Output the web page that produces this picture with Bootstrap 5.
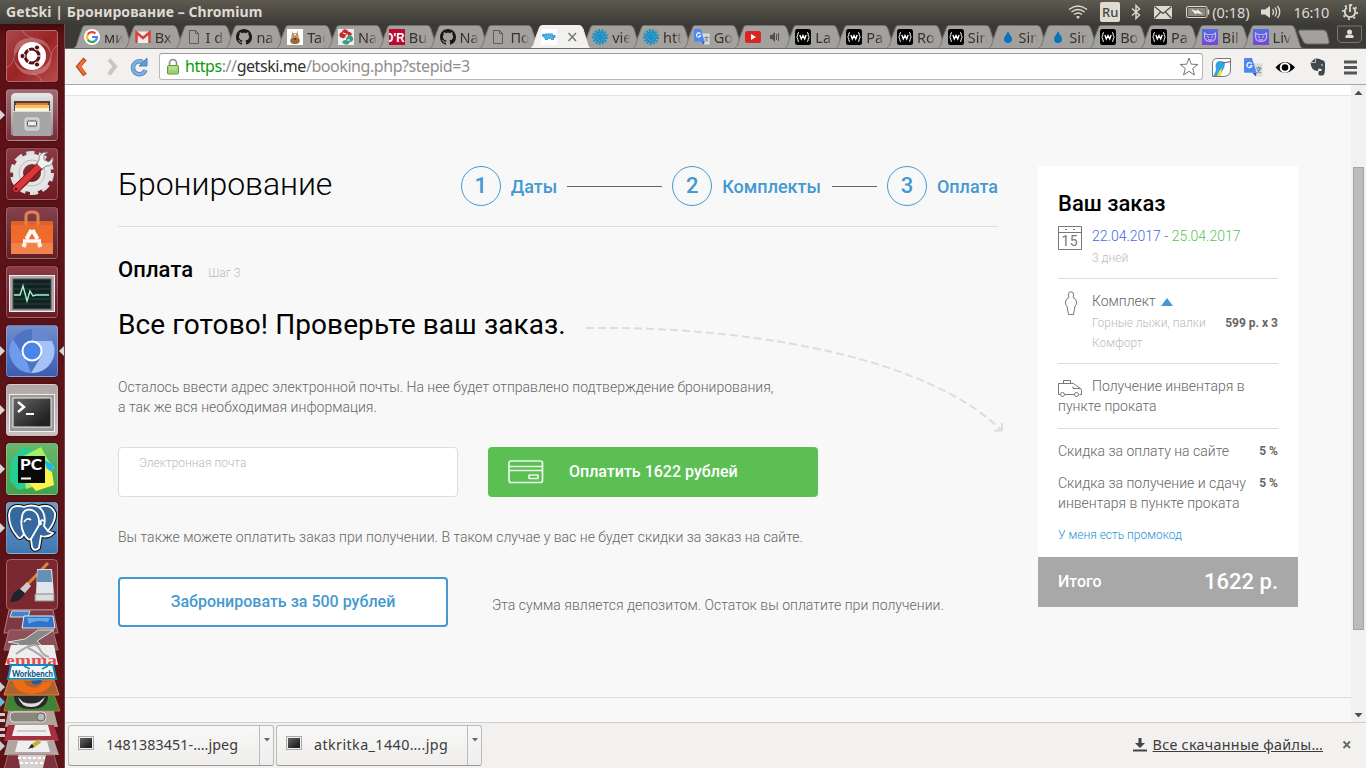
<!DOCTYPE html>
<html lang="ru">
<head>
<meta charset="utf-8">
<title>GetSki | Бронирование</title>
<link href="https://cdn.jsdelivr.net/npm/bootstrap@5.3.0/dist/css/bootstrap.min.css" rel="stylesheet">
<style>
body{width:1366px;height:768px;overflow:hidden;font-family:"Noto Sans",sans-serif;font-size:14px;line-height:20px;color:#666;background:#f8f8f8}
svg{display:block;flex:none}
.sys-panel{height:24px;background:linear-gradient(#5d5a50,#3d3b37);color:#dfdbd2}
.sys-title{font-weight:700;font-size:14px;letter-spacing:.07px;margin-left:-2px}
.sys-tray{gap:0;font-size:14.5px}
.kbd-lang{width:20px;height:20px;background:#dfdbd2;color:#45433f;border-radius:2px;font-size:13px;line-height:20px;text-align:center;font-weight:500}
.launcher{width:65px;background:linear-gradient(#420b0e,#5c1217 12px,#5c1318);border-right:1px solid #7d4548;padding:6px 0 0 6px;position:relative}
.tile{width:52px;height:52px;margin-bottom:7px;border-radius:4px;border:1px solid rgba(255,255,255,.22);box-shadow:0 0 2px rgba(0,0,0,.5);position:relative;background:linear-gradient(#8b3a45,#6c1b22)}
.tile>svg{margin:-1px}
.runs::before,.focused::after{content:"";position:absolute;top:20px;border:5px solid transparent}
.runs::before{left:-7px;border-left-color:#d5d5d5;border-right:0}
.focused::after{right:-7px;border-right-color:#d5d5d5;border-left:0}
.launcher-fold{margin-left:-6px;margin-top:-2px}
.tabstrip{height:25px;background:#3b3a36;padding-left:9px;border-bottom:1px solid #6b6a66}
.btab{flex:0 0 50.8px;height:24px;position:relative;padding:5px 0 0 10px;gap:4px;color:#3a302c;font-size:14.5px;line-height:16px}
.btab>.shape{position:absolute;left:0;top:0;fill:#a3a19d;stroke:#767470}
.btab>.fav{position:relative;width:16px;height:16px}
.btab>.lbl{position:relative;width:19px;overflow:hidden;white-space:nowrap;-webkit-mask-image:linear-gradient(90deg,#000 60%,transparent)}
.btab.current{z-index:2}
.btab.current>.shape{fill:#f2f1f0;stroke:#f2f1f0}
.btoolbar{height:36px;background:#f2f1f0;border-bottom:1px solid #a9a8a6;padding-left:8px}
.omni{width:1044px;height:27px;margin-left:9px;background:#fff;border:1px solid #b9b7b4;border-top-color:#9b9995;border-radius:3px;padding-left:7px;font-size:16px;color:#8e8e8e}
.viewport{height:637px;background:#f8f8f8;font-family:Roboto,sans-serif;font-weight:300}
.site{width:1286px;border-top:10px solid #fff;position:relative}
.site::before{content:"";position:absolute;inset:0 0 auto 0;border-top:1px solid #e4e4e4}
.booking{padding:71px 0 0 53px;gap:40px;height:603px;border-bottom:1px solid #ddd}
.pane{width:880px}
.steps-head{height:61px;border-bottom:1px solid #ddd}
.page-title{font-size:32px;line-height:36px;font-weight:300;color:#000;letter-spacing:-.06px}
.step-no{width:40px;height:40px;border:1px solid #4499d0;border-radius:50%;font-size:22px;line-height:38px;text-align:center;margin-right:10px}
.step-name{font-size:18px;line-height:42px}
.step{color:#4499d0;font-weight:500}
.step-line{height:1px;background:#666;margin-top:20px}
.sub-title{font-size:22px;line-height:28px;font-weight:500;color:#000;letter-spacing:.1px}
.dim{color:#bbb;font-size:12px}
.ready{font-size:28px;line-height:34px;font-weight:400;color:#000;letter-spacing:.09px}
.copy{letter-spacing:.015px}
.curve{position:absolute;left:520px;top:230px}
.mail-box{width:340px;height:50px;border:1px solid #ddd;border-radius:4px;background:#fff;padding:6px 20px;font-size:12px;line-height:18px;color:#bbb}
.pay-btn{width:330px;height:50px;border:0;border-radius:4px;background:#5bbf54;color:#fff;font-weight:500;font-size:16px;padding:0 20px}
.pay-btn:hover{background:#5bbf54;color:#fff}
.book-btn{width:330px;height:50px;border:2px solid #4499d0;border-radius:4px;background:#fff;color:#4499d0;font-weight:500;font-size:16px}
.order{width:260px;height:441px;background:#fff;padding:25px 20px 0;border:0;border-radius:0}
.order-title{font-size:22px;line-height:26px;font-weight:500;color:#000}
.order-row{border-bottom:1px solid #ddd}
.van{float:left;margin:4px 10px -4px 0}
.cost{font-size:12px;font-weight:700;color:#666}
.total{height:50px;margin:0 -20px;padding:0 20px;background:#a8a8a8;color:#fff;font-weight:500;font-size:16px}
.total-sum{font-size:22px}
.vscroll{width:15px;background:#f1f1f1}
.thumb{width:11px;height:463px;background:#bbb;border:1px solid #a5a5a5}
.shelf{height:46px;background:#f2f1f0;border-top:1px solid #cfcecc;padding:2px 0 0 3px;color:#3c3c3c}
.dl{width:206px;height:41px;border:1px solid #bbb;border-bottom-color:#999;border-radius:3px;background:linear-gradient(#f8f8f7,#efeeed);margin-right:2px;font-size:14.3px}
.dl-name{margin:-2px 0 0 12px}
.dl-arrow{width:14px;height:39px;border-left:1px solid #bbb;padding:12px 0 0 4px}
</style>
</head>
<body>
<svg width="0" height="0" class="position-absolute">
<defs>
<symbol id="tabshape" viewBox="0 0 60 24"><path d="M-2 24.5C3 24 3 19 5 13L8 5C9 1.500 10 1.500 13 1.500H47C50 1.500 50.500 2 52 5L56 18C57.500 23 57.500 24 61 24.500"/></symbol>
<symbol id="f-doc" viewBox="0 0 16 16"><path d="M3.500 1.500H9.500L12.500 4.500V14.500H3.500ZM9.500 1.500V4.500H12.500" fill="none" stroke="#5f5d5a"/></symbol>
<symbol id="f-git" viewBox="0 0 16 16"><path fill="#1b1817" d="M8 0C3.580 0 0 3.580 0 8c0 3.540 2.290 6.530 5.470 7.590.4.070.55-.17.55-.38v-1.490c-2.010.37-2.530-.49-2.690-.94-.09-.23-.48-.94-.82-1.130-.28-.15-.68-.52-.01-.53.63-.01 1.080.58 1.230.82.720 1.210 1.870.87 2.330.66.070-.52.280-.87.510-1.070-1.780-.2-3.640-.89-3.640-3.950 0-.87.310-1.590.820-2.150-.080-.2-.360-1.020.080-2.120 0 0 .670-.21 2.200.820.640-.18 1.320-.27 2-.27s1.360.090 2 .270c1.530-1.040 2.200-.820 2.200-.820.440 1.100.160 1.920.080 2.120.510.560.820 1.270.820 2.150 0 3.070-1.870 3.750-3.650 3.950.290.250.540.730.540 1.480v2.190c0 .210.150.460.550.380A8 8 0 0 0 16 8c0-4.420-3.580-8-8-8"/></symbol>
<symbol id="f-w" viewBox="0 0 16 16"><rect width="16" height="16" rx="2.500"/><path d="M4 3.500Q2.500 3.500 2.800 5.500T1.500 8Q2.800 8.200 2.800 10.500T4 12.500M12 3.500Q13.500 3.500 13.200 5.500T14.500 8Q13.200 8.200 13.200 10.500T12 12.500" fill="none" stroke="#fff"/><path d="M4.900 6L6.300 10L8 6.500L9.700 10L11.100 6" fill="none" stroke="#fff" stroke-width="1.400"/></symbol>
<symbol id="f-splat" viewBox="0 0 16 16"><circle cx="8" cy="8" r="6.600" fill="none" stroke="#1e8fc4" stroke-width="2.600" stroke-dasharray="2 1.200"/><circle cx="8" cy="8" r="5.700" fill="#1e8fc4"/><circle cx="8" cy="8" r="3.500" fill="none" stroke="#5bb7dd" stroke-width=".7" stroke-dasharray="1.500 1"/></symbol>
<symbol id="f-drop" viewBox="0 0 16 16"><path d="M9 2C10 5 13 7.500 13 10A4 4 0 0 1 5 10C5 7.500 8 5 9 2Z" fill="#0b73b9"/></symbol>
<symbol id="f-cat" viewBox="0 0 16 16"><linearGradient id="violet" x2="0" y2="1"><stop stop-color="#4f6fe0"/><stop offset="1" stop-color="#7a45cf"/></linearGradient><rect width="16" height="16" fill="url(#violet)"/><path d="M2.500 4L4.500 5.500H11.500L13.500 4V8A5.500 4.500 0 0 1 2.500 8Z" fill="none" stroke="#b9b9fa" stroke-width="1.200"/><path d="M5 7.500L7 8.500M11 7.500L9 8.500M6 10.500Q8 12 10 10.500" stroke="#d7d7ff" fill="none"/></symbol>
<symbol id="f-trans" viewBox="0 0 18 18"><path d="M8 5H17.500V17.500H11Z" fill="#dcdcdc"/><path d="M1 0H7.500L12 14H1A1 1 0 0 1 0 13V1A1 1 0 0 1 1 0Z" fill="#4a89f3"/><path d="M8 14H12L11 17.500Z" fill="#3352c4"/><path d="M7.200 5.400A2.400 2.400 0 1 0 7.500 7.500H5.500" fill="none" stroke="#fff" stroke-width="1.200"/><path d="M11.500 9.500H16.500M14 8V9.500M15.500 9.500Q15 12 12.500 14M12.500 10.500Q13.500 13 16 14" fill="none" stroke="#61828e"/></symbol>
<linearGradient id="metal" x2="0" y2="1"><stop stop-color="#e8e8e8"/><stop offset="1" stop-color="#8e8e8e"/></linearGradient>
<linearGradient id="screen" x2="1" y2="1"><stop stop-color="#666"/><stop offset=".8" stop-color="#222"/></linearGradient>
</defs></svg>

<div class="sys-panel d-flex align-items-center justify-content-between ps-1">
 <div class="sys-title ps-1">GetSki | Бронирование – Chromium</div>
 <div class="sys-tray d-flex align-items-center">
  <svg width="20" height="16" viewBox="0 0 20 16" fill="none" stroke="#dfdbd2" stroke-width="1.500"><path d="M1 5.500Q10-1.500 19 5.500M3.500 8Q10 3 16.500 8M6 10.500Q10 7.500 14 10.500"/><path d="M8 12.800Q10 11 12 12.800L10 15Z" fill="#dfdbd2" stroke="none"/></svg>
  <span class="kbd-lang" style="margin-left:12px">Ru</span>
  <svg width="10" height="16" viewBox="0 0 10 16" style="margin-left:11px"><path d="M1 4.500L8.500 11L5 14.500V1.500L8.500 5L1 11.500" fill="none" stroke="#dfdbd2" stroke-width="1.400"/></svg>
  <svg width="18" height="13" viewBox="0 0 18 13" style="margin-left:13px"><rect width="18" height="13" fill="#dfdbd2"/><path d="M.5.500L9 7.500L17.500.500M.5 12.500L6.500 6M17.500 12.500L11.500 6" fill="none" stroke="#4d4b45" stroke-width="1.200"/></svg>
  <svg width="24" height="12" viewBox="0 0 24 12" style="margin-left:14px"><rect x=".5" y=".5" width="20.500" height="11" rx="1.500" fill="none" stroke="#dfdbd2"/><rect x="2" y="2" width="17.500" height="8" fill="#8b8880"/><path d="M22.500 3.500V8.500" stroke="#dfdbd2" stroke-width="1.500"/><path d="M5 3L10.500 5L11.500 3.500L17 8.500L10.500 7L9.500 8.500Z" fill="#f4f1e9"/></svg>
  <span style="margin-left:2px;letter-spacing:-.05px">(0:18)</span>
  <svg width="21" height="16" viewBox="0 0 21 16" style="margin-left:12px"><path d="M0 5.500H4L9 2V14L4 10.500H0Z" fill="#dfdbd2"/><path d="M11.500 5Q13.500 8 11.500 11M14 3.500Q17 8 14 12.500M16.500 2Q21 8 16.500 14" fill="none" stroke="#dfdbd2" stroke-width="1.300"/></svg>
  <span style="margin-left:11px;letter-spacing:-.3px">16:10</span>
  <svg width="18" height="18" viewBox="0 0 18 18" style="margin:0 7px 0 12px" fill="none" stroke="#dfdbd2"><circle cx="9" cy="9" r="7.200" stroke-width="1.800" stroke-dasharray="2 3.650"/><path d="M6 4.500A5.300 5.300 0 1 0 12 4.500" stroke-width="1.800"/><path d="M9 1V9" stroke-width="1.800"/></svg>
 </div>
</div>

<div class="d-flex">
<aside class="launcher flex-shrink-0" style="height:744px">
 <div class="tile" style="background:linear-gradient(135deg,#a8484c,#9a2224 50%,#b84b4b)"><svg width="52" height="52" viewBox="0 0 52 52" fill="none"><path d="M8 28Q6 8 26 8Q44 8 45 26Q42 12 27 13Q12 14 8 28M45 24Q47 44 27 45Q12 45 8 30Q16 43 28 40Q43 38 45 24" fill="#fff" opacity=".27"/><path d="M16 0Q20 7 27 8M52 15Q45 20 45 27M36 52Q34 45 27 44M0 38Q8 33 8 27" stroke="#fff" opacity=".25"/><circle cx="26" cy="26" r="14" fill="#fff"/><circle cx="26" cy="26" r="7" stroke="#5b1116" stroke-width="3.200"/><path d="M30 26H36M24 22.500L21 17M24 29.500L21 35" stroke="#fff" stroke-width="1.200"/><g fill="#5b1116" stroke="#fff"><circle cx="16.500" cy="26" r="2.600"/><circle cx="31" cy="17.500" r="2.600"/><circle cx="31" cy="34.500" r="2.600"/></g></svg></div>
 <div class="tile runs" style="background:linear-gradient(#a06d76,#7d2a38)"><svg width="52" height="52" viewBox="0 0 52 52"><path d="M5 9Q5 4 10 4H42Q47 4 47 9V46H5Z" fill="url(#metal)"/><rect x="8" y="12" width="36" height="11" fill="#444"/><path d="M10 14H42V22H10Z" fill="#e87820"/><path d="M9 16H43V22H9Z" fill="#f6c069"/><path d="M9 19H43V23H9Z" fill="#fff3d3"/><path d="M7 22H45V47H7Z" fill="#a6a6a6"/><path d="M7 22.500H45" stroke="#ddd"/><rect x="19" y="29" width="14" height="12" rx="2" fill="#c8c8c8" stroke="#e2e2e2"/><rect x="21.500" y="32" width="9" height="5" rx="1" fill="#eee" stroke="#555"/></svg></div>
 <div class="tile"><svg width="52" height="52" viewBox="0 0 52 52"><circle cx="26" cy="25" r="19.500" fill="none" stroke="#dedede" stroke-width="5" stroke-dasharray="8 4.250"/><circle cx="26" cy="25" r="14" fill="none" stroke="#e5e5e5" stroke-width="10"/><circle cx="26" cy="25" r="13" fill="none" stroke="#bbb"/><path d="M9.500 41.500L34 18" stroke="#8a0f13" stroke-width="8.500" stroke-linecap="round"/><path d="M10 41L34 17.500" stroke="#d8373b" stroke-width="6" stroke-linecap="round"/><path d="M31 16L36 21L40 18Q48 18 47 9L43 14L38 12V7L42 4Q32 4 33 12Z" fill="#f2f2f2" stroke="#777" stroke-width=".8"/><circle cx="10" cy="41" r="1.500" fill="#631013"/></svg></div>
 <div class="tile" style="background:linear-gradient(#84404c,#5f2027)"><svg width="52" height="52" viewBox="0 0 52 52"><path d="M5 14H47V47H5Z" fill="#ee6c2b"/><path d="M5 14H47V18H5Z" fill="#d9632b"/><path d="M5 36H47V47H5Z" fill="#f2814b"/><path d="M20 18V9Q20 5 26 5T32 9V18" fill="none" stroke="#e58151" stroke-width="3"/><path d="M25.500 23L20.500 32M26.500 23L31.500 32" stroke="#fff" stroke-width="4"/><path d="M17 34H35" stroke="#fff" stroke-width="3.500"/><path d="M19 36L17.500 40M33 36L34.500 40" stroke="#fff" stroke-width="4"/></svg></div>
 <div class="tile"><svg width="52" height="52" viewBox="0 0 52 52"><rect x="3.500" y="9.500" width="45" height="36" fill="#aaa" stroke="#eee"/><rect x="7" y="13" width="38" height="30" fill="#102321" stroke="#555"/><path d="M8 18H44M8 23H44M8 28H44M8 33H44M8 38H44" stroke="#33413f"/><path d="M8 29H14L17 20L21 35L24 25L27 30L30 29H43" fill="none" stroke="#9ff5d0" stroke-width="1.400"/></svg></div>
 <div class="tile runs focused" style="background:linear-gradient(#738dcb,#3c5cae)"><svg width="52" height="52" viewBox="0 0 52 52"><circle cx="26" cy="26" r="22" fill="#4b74c7"/><path d="M26 4A22 22 0 0 1 46 16H26Z" fill="#6788d0"/><path d="M7 14L21 37L25 48A22 22 0 0 1 7 14" fill="#6f9bee"/><path d="M28 16H46A22 22 0 0 1 25 48L36 30Z" fill="#a5c2f8"/><circle cx="26" cy="26" r="9.500" fill="#4a86ea" stroke="#fff" stroke-width="2"/></svg></div>
 <div class="tile runs" style="background:linear-gradient(#b1a7a7,#c8c1c0)"><svg width="52" height="52" viewBox="0 0 52 52"><rect x="3.500" y="10.500" width="45" height="37" fill="#999" stroke="#eee"/><rect x="7" y="14" width="38" height="29" fill="url(#screen)" stroke="#eee"/><path d="M12 18L18 23L12 28" fill="none" stroke="#fff" stroke-width="2.500"/><path d="M20 30H28" stroke="#fff" stroke-width="2"/></svg></div>
 <div class="tile runs" style="background:linear-gradient(#69b66c,#43a24b)"><svg width="52" height="52" viewBox="0 0 52 52"><path d="M5 17L16 5L34 8L40 40L12 47L4 38Z" fill="#27ce91"/><path d="M16 14L35 4L42 17L48 24L40 40L20 46Z" fill="#a7ef60"/><path d="M38 17L48 22L44 34Z" fill="#16bdea"/><path d="M38 24L46 29L48 42L30 48L22 39Z" fill="#fcf44d"/><rect x="12" y="13" width="27" height="27" fill="#090909"/><text x="14" y="27" font-family="Lato" font-weight="900" font-size="15.500" textLength="22" lengthAdjust="spacingAndGlyphs" fill="#fff">PC</text><path d="M15 35.500H25" stroke="#fff" stroke-width="2"/></svg></div>
 <div class="tile runs" style="background:linear-gradient(#6b9aca,#4177b1)"><svg width="52" height="52" viewBox="0 0 52 52" fill="#35689d" stroke="#fff" stroke-width="1.800"><path d="M18 5Q4 1 3 13Q3 25 11 34Q14 39 18 32Q22 39 25 37L26 45Q28 50 33 46L35 34Q42 36 47 31L42 29Q50 19 49 11Q45 1 33 5Q25 2 18 5Z" stroke="#111" stroke-width="4"/><path d="M18 5Q4 1 3 13Q3 25 11 34Q14 39 18 32Q22 39 25 37L26 45Q28 50 33 46L35 34Q42 36 47 31L42 29Q50 19 49 11Q45 1 33 5Q25 2 18 5Z"/><path d="M18 32Q14 24 16 15Q17 6 26 8Q34 11 33 23L25 37M18 20Q21 15 25 18M33 5Q41 12 38 24L42 29M38 19Q34 16 35 23" fill="none"/></svg></div>
 <svg class="launcher-fold" width="65" height="209" viewBox="0 559 65 209">
  <rect x="6.500" y="559.500" width="51" height="50" rx="4" fill="#7a2931" stroke="#a26a70"/><path d="M24 588L48 563" stroke="#d58a3b" stroke-width="3"/><path d="M10 602Q20 603 25 593L20 589Q13 590 10 602" fill="#20242a"/><path d="M20 589L27 582L31 586L25 593Z" fill="#ccc"/><path d="M37 569H52L54 595H36Z" fill="#dfe5eb"/><path d="M37.500 570H51L52 582H37Z" fill="#658eb9"/><path d="M35 594H54V601H35Z" fill="#ddd" stroke="#888"/>
  <path d="M9 610H53L58 633H4Z" fill="#7e3a44" stroke="#b18086"/><path d="M12 611H30L28 617H10Z" fill="#4382cb" stroke="#ddd"/><path d="M24 616H53L55 628H22Z" fill="#2c75c9" stroke="#eee"/><path d="M27 618H50L48 622Q36 619 29 624Z" fill="#68a6e4"/>
  <path d="M9 630H53L58 650H4Z" fill="#8e5057" stroke="#aa7278"/><path d="M8 642L25 639L38 630H54L37 641L41 645L30 648L17 647L19 644Z" fill="#888" stroke="#ddd"/>
  <path d="M11 645H54L58 665H5Z" fill="#eee"/><path d="M16 654Q35 640 39 648T49 657M28 648Q37 652 46 660" fill="none" stroke="#aaa" stroke-width="2"/><text x="6" y="665" font-family="Liberation Serif" font-weight="700" font-size="14" textLength="51" lengthAdjust="spacingAndGlyphs" fill="#e34c52">emma</text>
  <path d="M11 665H53L56 679H8Z" fill="#f4f8fa" stroke="#1387b5" stroke-width="2"/><path d="M24 666L30 669M42 669L48 666" stroke="#1588b4" stroke-width="1.500" fill="none"/><text x="12" y="677" font-family="Lato" font-weight="900" font-size="9" textLength="41" lengthAdjust="spacingAndGlyphs" fill="#125a83">Workbench</text>
  <path d="M9 680H54L59 695H4Z" fill="#ae622f" stroke="#cc895d"/><path d="M13 680Q14 693 32 694Q51 692 52 680Q45 684 43 681Q39 691 27 686L23 680Z" fill="#f06b14"/><path d="M31 681Q34 688 43 681L40 680Z" fill="#1760a8"/>
  <path d="M8 695H54L60 711H4Z" fill="#3d8438" stroke="#d86329"/><path d="M14 696H48Q48 709 31 709T14 696" fill="#292929"/><path d="M18 697Q21 707 31 707T45 697L39 702Q31 705 23 702Z" fill="#ddd"/>
  <path d="M8 711H54L58 727H5Z" fill="#afa39c"/><rect x="10" y="712" width="36" height="10" rx="4" fill="#88877d" stroke="#ddd"/><circle cx="41" cy="717" r="4" fill="#bbb" stroke="#666"/>
  <path d="M8 725H54L59 741H4Z" fill="#a6303d"/><path d="M15 725H48L51 736H12Z" fill="#f0eeee"/><path d="M17 731H46" stroke="#aaa"/>
  <path d="M8 740H54L59 755H4Z" fill="#b3a5a4"/><path d="M18 741H47L50 752H15Z" fill="#eee"/><path d="M31 747L40 741" stroke="#c1b338" stroke-width="4"/><path d="M28 749L32 744L34 747Z" fill="#222"/>
  <path d="M8 755H54L58 769H4Z" fill="#7d333b" stroke="#a7646b"/><path d="M18 755H46L43 768H20Z" fill="#d5d0cf"/><path d="M18 758H45M20 763H44" stroke="#fff" stroke-dasharray="3 2" stroke-width="2"/>
  <g fill="#ccc"><path d="M0 682L5 687L0 692Z"/><path d="M0 697L5 702L0 707Z" fill="#63bce6"/><path d="M0 713H5V716H0ZM0 719H5V722H0ZM0 728H5V731H0ZM0 734H5V737H0ZM0 741L5 746L0 751Z"/></g>
 </svg>
</aside>

<main style="width:1301px">
 <div class="tabstrip d-flex">
  <div class="btab d-flex"><svg class="shape" width="60" height="24"><use href="#tabshape"/></svg><svg class="fav" viewBox="0 0 16 16"><circle cx="8" cy="8" r="8" fill="#fff"/><g fill="none" stroke-width="2.200"><path d="M11.500 4.500A5 5 0 0 0 3.700 5.500" stroke="#ea4335"/><path d="M3.700 5.500A5 5 0 0 0 3.700 10.500" stroke="#fbbc05"/><path d="M3.700 10.500A5 5 0 0 0 11 12" stroke="#34a853"/><path d="M11 12A5 5 0 0 0 13 8H8" stroke="#4285f4"/></g></svg><span class="lbl">ми</span></div>
  <div class="btab d-flex"><svg class="shape" width="60" height="24"><use href="#tabshape"/></svg><svg class="fav" viewBox="0 0 16 16"><path d="M1 2.500H15V14H1Z" fill="#eee"/><path d="M1.500 14V3.500L8 9L14.500 3.500V14" fill="none" stroke="#d94437" stroke-width="2.500"/></svg><span class="lbl">Вх</span></div>
  <div class="btab d-flex"><svg class="shape" width="60" height="24"><use href="#tabshape"/></svg><svg class="fav"><use href="#f-doc"/></svg><span class="lbl">I d</span></div>
  <div class="btab d-flex"><svg class="shape" width="60" height="24"><use href="#tabshape"/></svg><svg class="fav"><use href="#f-git"/></svg><span class="lbl">na</span></div>
  <div class="btab d-flex"><svg class="shape" width="60" height="24"><use href="#tabshape"/></svg><svg class="fav" viewBox="0 0 16 16"><rect width="16" height="16" fill="#fff"/><path d="M5 1V5H11V1L10 4H6ZM4.500 6H11.500Q13 15 8 15T4.500 6" fill="#c49b62"/><path d="M3.500 10Q8 7 12.500 10Q14 15 8 15Q2 15 3.500 10Z" fill="#9a6a38"/><path d="M6 5V6M10 5V6M7 10H9" stroke="#222"/></svg><span class="lbl">Tag</span></div>
  <div class="btab d-flex"><svg class="shape" width="60" height="24"><use href="#tabshape"/></svg><svg class="fav" viewBox="0 0 16 16"><rect width="16" height="16" fill="#eee"/><path d="M2 8Q0 4 4 3Q5-1 9 1Q12 3 8 6Q7 11 2 8" fill="#c52b2d"/><path d="M14 7Q17 12 12 13Q10 17 6 15Q2 12 8 11Q8 6 14 7" fill="#3e9b83"/><path d="M9 3Q13 2 14 6L10 7Z" fill="#c52b2d"/><path d="M5 4L8 5M9 11L12 11" stroke="#fff" fill="none"/></svg><span class="lbl">Na</span></div>
  <div class="btab d-flex"><svg class="shape" width="60" height="24"><use href="#tabshape"/></svg><svg class="fav" viewBox="0 0 16 16"><rect width="16" height="16" fill="#bd0b30"/><text x="-4.500" y="12.500" font-family="Liberation Sans" font-weight="700" font-size="12.500" textLength="20" lengthAdjust="spacingAndGlyphs" fill="#fff">O'R</text></svg><span class="lbl">Bu</span></div>
  <div class="btab d-flex"><svg class="shape" width="60" height="24"><use href="#tabshape"/></svg><svg class="fav"><use href="#f-git"/></svg><span class="lbl">Na</span></div>
  <div class="btab d-flex"><svg class="shape" width="60" height="24"><use href="#tabshape"/></svg><svg class="fav"><use href="#f-doc"/></svg><span class="lbl">По</span></div>
  <div class="btab current d-flex"><svg class="shape" width="60" height="24"><use href="#tabshape"/></svg><svg class="fav" viewBox="0 0 16 16"><rect width="16" height="16" fill="#fff"/><path d="M1 5H4V4.500H12V6H14.500V9H13V11H10V10H7V11H4V9.500L1 7Z" fill="#42a2dc"/><path d="M4 7H11M5 9H12" stroke="#92cdf0" stroke-width=".6"/></svg><svg width="21" height="16" class="position-relative"><path d="M7.500 4L15 12M15 4L7.500 12" stroke="#777" stroke-width="1.500"/></svg></div>
  <div class="btab d-flex"><svg class="shape" width="60" height="24"><use href="#tabshape"/></svg><svg class="fav"><use href="#f-splat"/></svg><span class="lbl">vie</span></div>
  <div class="btab d-flex"><svg class="shape" width="60" height="24"><use href="#tabshape"/></svg><svg class="fav"><use href="#f-splat"/></svg><span class="lbl">htt</span></div>
  <div class="btab d-flex"><svg class="shape" width="60" height="24"><use href="#tabshape"/></svg><svg class="fav"><use href="#f-trans"/></svg><span class="lbl">Go</span></div>
  <div class="btab d-flex"><svg class="shape" width="60" height="24"><use href="#tabshape"/></svg><svg class="fav" viewBox="0 0 16 16"><rect y="2" width="16" height="12" rx="2.500" fill="#dc2422"/><path d="M6 5L11 8L6 11Z" fill="#fff"/></svg><svg class="position-relative" width="20" height="16" fill="none" stroke="#5a4d48"><path d="M5 6H7L10 3V13L7 10H5Z" fill="#5a4d48" stroke="none"/><path d="M11.500 5V11M13.500 4V12"/></svg></div>
  <div class="btab d-flex"><svg class="shape" width="60" height="24"><use href="#tabshape"/></svg><svg class="fav"><use href="#f-w"/></svg><span class="lbl">La</span></div>
  <div class="btab d-flex"><svg class="shape" width="60" height="24"><use href="#tabshape"/></svg><svg class="fav"><use href="#f-w"/></svg><span class="lbl">Pa</span></div>
  <div class="btab d-flex"><svg class="shape" width="60" height="24"><use href="#tabshape"/></svg><svg class="fav"><use href="#f-w"/></svg><span class="lbl">Ro</span></div>
  <div class="btab d-flex"><svg class="shape" width="60" height="24"><use href="#tabshape"/></svg><svg class="fav"><use href="#f-w"/></svg><span class="lbl">Sin</span></div>
  <div class="btab d-flex"><svg class="shape" width="60" height="24"><use href="#tabshape"/></svg><svg class="fav"><use href="#f-drop"/></svg><span class="lbl">Sin</span></div>
  <div class="btab d-flex"><svg class="shape" width="60" height="24"><use href="#tabshape"/></svg><svg class="fav"><use href="#f-drop"/></svg><span class="lbl">Sin</span></div>
  <div class="btab d-flex"><svg class="shape" width="60" height="24"><use href="#tabshape"/></svg><svg class="fav"><use href="#f-w"/></svg><span class="lbl">Bo</span></div>
  <div class="btab d-flex"><svg class="shape" width="60" height="24"><use href="#tabshape"/></svg><svg class="fav"><use href="#f-w"/></svg><span class="lbl">Pa</span></div>
  <div class="btab d-flex"><svg class="shape" width="60" height="24"><use href="#tabshape"/></svg><svg class="fav"><use href="#f-cat"/></svg><span class="lbl">Bil</span></div>
  <div class="btab d-flex"><svg class="shape" width="60" height="24"><use href="#tabshape"/></svg><svg class="fav"><use href="#f-cat"/></svg><span class="lbl">Liv</span></div>
  <svg width="73" height="24" viewBox="1 0 73 24"><path d="M8 6H31Q34 6 35 9L37 17Q38 20 35 20H15Q12 20 11 17L7 9Q6 6 8 6Z" fill="#a3a19d" stroke="#666"/><path d="M45.500 2V14Q45.500 18.500 50 18.500H65Q69.500 18.500 69.500 14V2Z" fill="#3f3d39" stroke="#77756f"/><circle cx="57.500" cy="8" r="2.500" fill="#ddd"/><path d="M53.500 14V11.500Q57.500 9.500 61.500 11.500V14Z" fill="#ddd"/></svg>
 </div>
 <div class="btoolbar d-flex align-items-center">
  <svg width="77" height="34" viewBox="0 0 77 34"><path d="M12 9L5.500 16.500L12 25" fill="none" stroke="#b9401b" stroke-width="4.500"/><path d="M11.500 10L6 16.500L11.500 24" fill="none" stroke="#ed7138" stroke-width="2.800"/><path d="M36 9.500L42 16.500L36 24.500" fill="none" stroke="#c9c7c4" stroke-width="4"/><path d="M69.500 12A6.500 6.500 0 1 0 72.500 20" fill="none" stroke="#4d80b8" stroke-width="4.500"/><path d="M69.500 12A6.500 6.500 0 1 0 72.500 20" fill="none" stroke="#82b0e0" stroke-width="2.800"/><path d="M74 8V16H66Z" fill="#689bd3" stroke="#4d80b8"/></svg>
  <div class="omni d-flex align-items-center">
   <svg width="12" height="16" viewBox="0 0 12 16"><path d="M2.500 7V4A3.500 3.500 0 0 1 9.500 4V7" fill="none" stroke="#888" stroke-width="1.500"/><rect x=".5" y="6.500" width="11" height="8.500" rx="1" fill="#9bd36c" stroke="#659740"/><path d="M2 8H10M2 10H10" stroke="#c9ecb0"/></svg>
   <span style="margin:-2px 0 0 6px;letter-spacing:-.44px"><span style="color:#0b9a0b">https</span>://<span style="color:#303030">getski.me</span>/booking.php?stepid=3</span>
   <svg class="ms-auto" width="22" height="20" viewBox="0 0 22 20"><path d="M9 1L11.300 7.200L17.800 7.500L12.700 11.500L14.500 18L9 14.300L3.500 18L5.300 11.500L.2 7.500L6.700 7.200Z" fill="#fff" stroke="#777"/></svg>
  </div>
  <svg width="154" height="34" viewBox="0 0 154 34"><path d="M14 8.500H27.500V20Q27.500 26.500 20 26.500H9.500V14Q9.500 8.500 14 8.500Z" fill="#fff" stroke="#777"/><path d="M10 26Q14 21 12.500 16Q13 11 17 11Q21 10.500 22 14Q21 20 16 26Z" fill="#30a5e4"/><path d="M20 13L28 11.500" stroke="#6b5444"/><path d="M14 26Q16 20 19 18L18 26Z" fill="#f3d84b"/><svg x="41" y="8" width="19" height="19"><use href="#f-trans"/></svg><path d="M72.500 17.500Q82 6.500 92 17.500Q82 28 72.500 17.500" fill="#000"/><circle cx="82" cy="17.500" r="4.300" stroke="#fff" stroke-width="2"/><path d="M107.500 12.500L112 8.500Q117 8 118.500 10Q122 10 122 14Q122.500 25.500 119.500 25.500H116.500Q114.500 24 116 21H118.500V19L115.500 18.500L115 21Q108 21 107.500 12.500Z" fill="#3f4a4d"/><path d="M107.500 12.500H112.500V8.500" stroke="#f2f1f0" fill="none" stroke-width=".7"/><circle cx="119" cy="15" r=".8" fill="#fff"/><path d="M141 12H154M141 17.500H154M141 23H154" stroke="#555" stroke-width="3"/></svg>
 </div>

 <div class="viewport d-flex overflow-hidden">
  <div class="site">
   <div class="booking d-flex">
    <section class="pane">
     <div class="steps-head d-flex">
      <h1 class="page-title m-0" style="width:343px">Бронирование</h1>
      <div class="step d-flex"><div class="step-no">1</div><span class="step-name">Даты</span></div>
      <div class="step-line" style="width:95px;margin-left:10px;margin-right:10px"></div>
      <div class="step d-flex"><div class="step-no">2</div><span class="step-name">Комплекты</span></div>
      <div class="step-line" style="width:45px;margin-left:11px;margin-right:10px"></div>
      <div class="step d-flex"><div class="step-no">3</div><span class="step-name">Оплата</span></div>
     </div>
     <div class="d-flex align-items-baseline" style="margin-top:29px"><h2 class="sub-title m-0">Оплата</h2><span class="dim" style="margin-left:15px">Шаг 3</span></div>
     <h3 class="ready mb-0" style="margin-top:24px">Все готово! Проверьте ваш заказ.</h3>
     <svg class="curve" width="430" height="120" viewBox="585 325 430 120" fill="none" stroke="#ddd" stroke-width="2"><path d="M586 328C760 326 930 360 1001 430" stroke-dasharray="8 4"/><path d="M994 430.500H1002V423"/></svg>
     <p class="copy mb-0" style="margin-top:35px">Осталось ввести адрес электронной почты. На нее будет отправлено подтверждение бронирования,<br>а так же вся необходимая информация.</p>
     <div class="d-flex" style="margin-top:30px;gap:30px">
      <div class="mail-box">Электронная почта</div>
      <button class="btn pay-btn d-flex align-items-center"><svg width="36" height="24" viewBox="0 0 36 24" fill="none" stroke="#e9f7e8" stroke-width="1.700"><rect x="1" y="1" width="33.500" height="21.500" rx="2"/><path d="M1 6.500H34.500M1 10.500H34.500"/><rect x="21" y="15" width="9" height="3.500" rx=".5"/></svg><span style="margin-left:25px">Оплатить 1622 рублей</span></button>
     </div>
     <p class="copy mb-0" style="margin-top:30px">Вы также можете оплатить заказ при получении. В таком случае у вас не будет скидки за заказ на сайте.</p>
     <div class="d-flex" style="margin-top:30px"><button class="btn book-btn">Забронировать за 500 рублей</button><span style="margin:18px 0 0 44px;letter-spacing:.03px">Эта сумма является депозитом. Остаток вы оплатите при получении.</span></div>
    </section>

    <aside class="order card">
     <h2 class="order-title mb-0">Ваш заказ</h2>
     <div class="order-row d-flex" style="height:62px;padding-top:9px;gap:10px">
      <svg width="24" height="24" viewBox="0 0 24 24"><path d="M.5.500H23.500V23.500H.5ZM.5 6.500H23.500M7 3.500H9M15 3.500H17" fill="none" stroke="#777"/><text x="3.500" y="20" font-family="Roboto" font-weight="400" font-size="14" textLength="16" fill="#777">15</text></svg>
      <div><div><span style="color:#4169e1">22.04.2017</span> - <span style="color:#5bbf54">25.04.2017</span></div><div class="dim" style="margin-top:2px">3 дней</div></div>
     </div>
     <div class="order-row d-flex" style="height:85px;padding-top:12px;gap:10px">
      <svg width="24" height="26" viewBox="0 0 24 26" fill="none" stroke="#777"><path d="M11 6.500Q9.500 4 11 1.500Q13 0 15 1.500Q16.500 4 15 6.500Q18.500 8 18.500 11Q19 14 17 15L15.500 23.500H10.500L9 15Q7 14 7.500 11Q7.500 8 11 6.500Z"/></svg>
      <div class="flex-grow-1"><div>Комплект <svg class="d-inline-block" width="12" height="8" style="margin-left:2px"><path d="M0 8L6 0L12 8Z" fill="#4499d0"/></svg></div><div class="d-flex justify-content-between dim" style="margin-top:2px"><span>Горные лыжи, палки</span><span class="cost">599 р. х 3</span></div><div class="dim">Комфорт</div></div>
     </div>
     <div class="order-row" style="height:65px;padding-top:12px"><svg class="van" width="24" height="18" viewBox="0 0 24 18" fill="none" stroke="#777"><path d="M2 14.500H.5V3.500H15.500L23.500 9.500V14.500H21.500M16 14.500H7M15 6.500V8.500H23M5.500 3.500V.500H12.500V3.500"/><circle cx="4.500" cy="14.500" r="2"/><circle cx="18.500" cy="14.500" r="2"/></svg>Получение инвентаря в<br>пункте проката</div>
     <div class="d-flex justify-content-between" style="margin-top:12px"><span>Скидка за оплату на сайте</span><span class="cost">5 %</span></div>
     <div class="d-flex justify-content-between" style="margin-top:12px"><span>Скидка за получение и сдачу<br>инвентаря в пункте проката</span><span class="cost">5 %</span></div>
     <div style="margin-top:12px;font-size:12px;color:#2693d8">У меня есть промокод</div>
     <div class="total d-flex justify-content-between align-items-center" style="margin-top:12px"><span>Итого</span><span class="total-sum">1622 р.</span></div>
    </aside>
   </div>
  </div>
  <div class="vscroll d-flex flex-column align-items-center"><svg class="position-absolute" width="15" height="637"><path d="M3.500 10L7.500 5.500L11.500 10ZM3.500 628L7.500 632.500L11.500 628Z" fill="#505050"/></svg><div class="thumb" style="margin-top:82px"></div></div>
 </div>

 <div class="shelf d-flex">
  <div class="dl d-flex align-items-center"><svg width="16" height="14" viewBox="0 0 16 14" style="margin:-5px 0 0 9px"><rect x=".5" y=".5" width="15" height="13" fill="#eee" stroke="#aaa"/><rect x="2" y="2" width="12" height="10" fill="url(#screen)"/></svg><span class="dl-name" style="letter-spacing:.07px">1481383451-….jpeg</span><span class="dl-arrow ms-auto"><svg width="6" height="4"><path d="M0 0H6L3 3.500Z" fill="#666"/></svg></span></div>
  <div class="dl d-flex align-items-center"><svg width="16" height="14" viewBox="0 0 16 14" style="margin:-5px 0 0 9px"><rect x=".5" y=".5" width="15" height="13" fill="#eee" stroke="#aaa"/><rect x="2" y="2" width="12" height="10" fill="url(#screen)"/></svg><span class="dl-name" style="letter-spacing:.42px">atkritka_1440….jpg</span><span class="dl-arrow ms-auto"><svg width="6" height="4"><path d="M0 0H6L3 3.500Z" fill="#666"/></svg></span></div>
  <div class="d-flex align-items-center ms-auto" style="height:40px;margin-right:14px"><svg width="14" height="14" viewBox="0 0 14 14"><path d="M5.500 0H8.500V5H12L7 10L2 5H5.500ZM0 11.500V13.500H14V11.500" fill="#444"/></svg><span class="text-decoration-underline" style="margin-left:6px;font-size:14.3px;letter-spacing:.3px">Все скачанные файлы…</span><svg width="10" height="10" style="margin-left:19px"><path d="M1.500 1.500L8 8M8 1.500L1.500 8" stroke="#666" stroke-width="1.800"/></svg></div>
 </div>
</main>
</div>
<script src="https://cdn.jsdelivr.net/npm/bootstrap@5.3.0/dist/js/bootstrap.bundle.min.js"></script>
</body>
</html>
